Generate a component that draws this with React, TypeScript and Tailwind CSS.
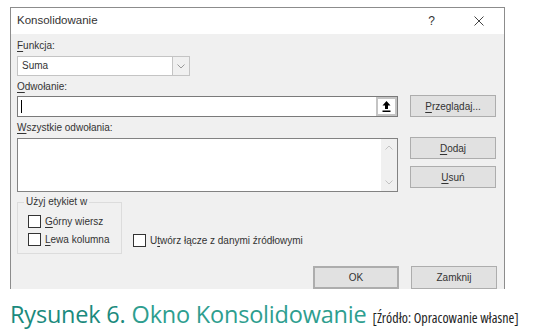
import React from 'react';

const ui = { fontFamily: '"Liberation Sans", Arial, sans-serif' };
const cap = { fontFamily: '"Open Sans", "Noto Sans", sans-serif' };

const Key = ({ children }: { children: React.ReactNode }) => <span className="underline underline-offset-2">{children}</span>;

const Check = ({ children }: { children: React.ReactNode }) => (
  <div className="flex items-center h-[13px]">
    <div className="w-[13px] h-[13px] border border-[#333] bg-white shrink-0" />
    <span className="ml-[4px] leading-[13px]">{children}</span>
  </div>
);

const Btn = ({ children, className = '' }: { children: React.ReactNode; className?: string }) => (
  <div className={`w-[86px] flex items-center justify-center bg-[#e1e1e1] border border-[#adadad] ${className}`}>{children}</div>
);

export default function App() {
  return (
    <div className="w-[533px] h-[330px] bg-white pt-[7px] pl-[10px] overflow-hidden" style={ui}>
      <div className="w-[495px] h-[282px] border border-b-0 border-[#8c8c8c] flex flex-col">
        {/* title bar */}
        <div className="h-[27px] bg-white flex items-center pl-[6px] text-[11.5px] text-[#333]">
          <span>Konsolidowanie</span>
          <span className="ml-auto text-[12px]">?</span>
          <svg className="ml-[39px] mr-[20px]" width="10" height="10" viewBox="0 0 10 10">
            <path d="M0.5 0.5 L9.5 9.5 M9.5 0.5 L0.5 9.5" stroke="#444" strokeWidth="1" />
          </svg>
        </div>

        {/* body */}
        <div className="flex-1 bg-[#f0f0f0] flex flex-col text-[10px] text-[#333]">
          <div className="flex pl-[6px]">
            <div className="w-[381px] flex flex-col">
              <div className="mt-[5px] h-[14px] leading-[14px]"><Key>F</Key>unkcja:</div>
              <div className="mt-[3px] w-[173px] h-[20px] bg-white border border-[#c4c4c4] flex">
                <span className="flex-1 pl-[4px] leading-[18px]">Suma</span>
                <div className="w-[17px] h-full bg-[#f0f0f0] border-l border-[#c4c4c4] flex items-center justify-center">
                  <svg width="8" height="5" viewBox="0 0 8 5"><path d="M0.5 0.5 L4 4 L7.5 0.5" fill="none" stroke="#999" strokeWidth="1" /></svg>
                </div>
              </div>
              <div className="mt-[4px] h-[14px] leading-[14px]"><Key>O</Key>dwołanie:</div>
              <div className="mt-[2px] h-[21px] bg-white border border-[#7a7a7a] flex items-center">
                <div className="ml-[3px] w-px h-[13px] bg-black" />
                <div className="ml-auto w-[21px] h-[19px] border-2 border-[#c4c4c4] bg-white flex items-center justify-center">
                  <svg width="9" height="11" viewBox="0 0 9 11">
                    <path d="M4.5 0 L8.5 4.5 L6 4.5 L6 8 L3 8 L3 4.5 L0.5 4.5 Z" fill="#000" />
                    <rect x="0.5" y="9.5" width="8" height="1.5" fill="#000" />
                  </svg>
                </div>
              </div>
              <div className="mt-[4px] h-[14px] leading-[14px]"><Key>W</Key>szystkie odwołania:</div>
              <div className="mt-[3px] h-[54px] bg-white border border-[#828282] flex">
                <div className="flex-1" />
                <div className="w-[16px] h-full bg-[#f0f0f0] flex flex-col items-center justify-between py-[6px]">
                  <svg width="8" height="5" viewBox="0 0 8 5"><path d="M0.5 4.5 L4 1 L7.5 4.5" fill="none" stroke="#c2c2c2" strokeWidth="1" /></svg>
                  <svg width="8" height="5" viewBox="0 0 8 5"><path d="M0.5 0.5 L4 4 L7.5 0.5" fill="none" stroke="#c2c2c2" strokeWidth="1" /></svg>
                </div>
              </div>
              <div className="mt-[3px] flex items-end">
                <fieldset className="w-[105px] h-[59px] border border-[#dcdcdc] pl-[10px] flex flex-col gap-[5px]">
                  <legend className="ml-[-4px] px-[2px] h-[14px] leading-[14px]">Użyj etykiet w</legend>
                  <div className="mt-[6px]"><Check><Key>G</Key>órny wiersz</Check></div>
                  <Check><Key>L</Key>ewa kolumna</Check>
                </fieldset>
                <div className="ml-[11px] mb-[7px]">
                  <Check>U<Key>t</Key>wórz łącze z danymi źródłowymi</Check>
                </div>
              </div>
            </div>
            <div className="ml-[12px] flex flex-col">
              <Btn className="mt-[61px] h-[22px]"><span><Key>P</Key>rzeglądaj...</span></Btn>
              <Btn className="mt-[20px] h-[22px]"><span><Key>D</Key>odaj</span></Btn>
              <Btn className="mt-[7px] h-[22px]"><span><Key>U</Key>suń</span></Btn>
            </div>
          </div>
          <div className="mt-[12px] flex justify-end gap-[12px] pr-[7px]">
            <Btn className="h-[23px] border-2 border-[#8a8a8a]">OK</Btn>
            <Btn className="h-[23px]">Zamknij</Btn>
          </div>
        </div>
      </div>

      {/* caption */}
      <div className="mt-[8px] flex items-baseline whitespace-nowrap" style={cap}>
        <span className="text-[23.5px] font-medium text-[#1b8a7d] tracking-[-0.2px]">Rysunek 6.</span>
        <span className="ml-[6px] text-[23.5px] text-[#2e9e8f] tracking-[-0.2px]">Okno Konsolidowanie</span>
        <span className="ml-[6px] text-[14px] text-[#222] font-stretch-condensed">[Źródło: Opracowanie własne]</span>
      </div>
    </div>
  );
}
